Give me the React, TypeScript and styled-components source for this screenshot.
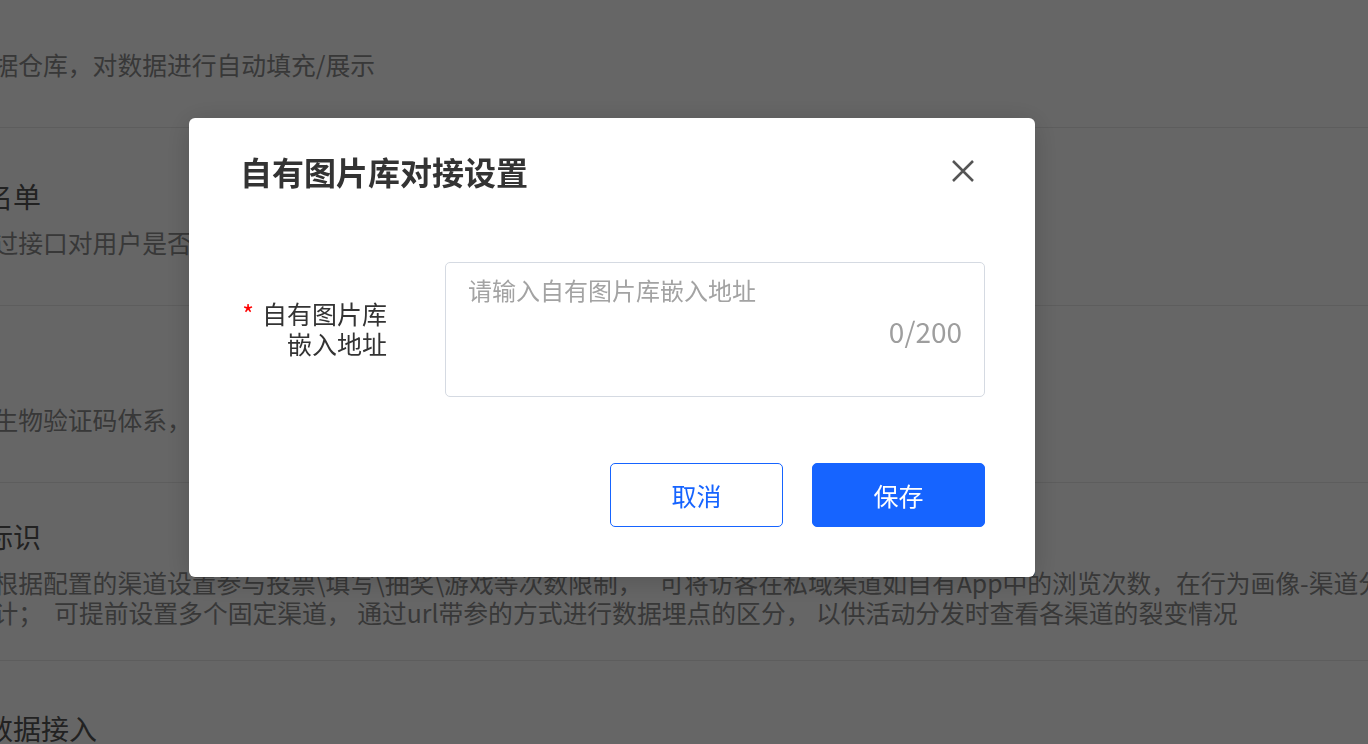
import React from 'react';
import styled, { createGlobalStyle } from 'styled-components';

const GlobalStyle = createGlobalStyle`
  html,
  body {
    margin: 0;
    padding: 0;
    overflow: hidden;
    background: #fff;
  }

  body {
    font-family: 'Noto Sans CJK SC', 'Noto Sans', sans-serif;
  }
`;

interface ISettingRow {
  title: string;
  lines: string[];
}

const rows: ISettingRow[] = [
  { title: '数仓', lines: ['对接数据仓库，对数据进行自动填充/展示'] },
  { title: '黑白名单', lines: ['支持通过接口对用户是否在黑白名单中进行校验'] },
  { title: '验证', lines: ['可对接生物验证码体系，提升活动安全性'] },
  {
    title: '渠道标识',
    lines: [
      '系统可根据配置的渠道设置参与投票\\填写\\抽奖\\游戏等次数限制，   可将访客在私域渠道如自有App中的浏览次数，在行为画像-渠道分析中进行',
      '数据统计；  可提前设置多个固定渠道， 通过url带参的方式进行数据埋点的区分， 以供活动分发时查看各渠道的裂变情况',
    ],
  },
  { title: '外部数据接入', lines: ['支持外部数据接入'] },
];

const CloseIcon = () => (
  <svg width="22" height="22" viewBox="0 0 22 22" fill="none">
    <path d="M1 1L21 21M21 1L1 21" stroke="#555" strokeWidth="2.5" />
  </svg>
);

export default function App() {
  return (
    <>
      <GlobalStyle />
      <Page>
        {rows.map((row) => (
          <Row key={row.title}>
            <RowTitle>{row.title}</RowTitle>
            <RowDesc>
              {row.lines.map((line) => (
                <DescLine key={line}>{line}</DescLine>
              ))}
            </RowDesc>
          </Row>
        ))}
      </Page>

      <Overlay>
        <Modal>
          <Header>
            <Title>自有图片库对接设置</Title>
            <CloseButton aria-label="关闭">
              <CloseIcon />
            </CloseButton>
          </Header>

          <FormRow>
            <Label>
              <Required>*</Required>自有图片库
              <br />
              嵌入地址
            </Label>
            <Field>
              <TextArea placeholder="请输入自有图片库嵌入地址" maxLength={200} />
              <Count>0/200</Count>
            </Field>
          </FormRow>

          <Footer>
            <Button>取消</Button>
            <Button $primary>保存</Button>
          </Footer>
        </Modal>
      </Overlay>
    </>
  );
}

const Page = styled.div`
  margin: -49.5px 0 0 -81px;
`;

const Row = styled.div`
  height: 176.5px;
  display: flex;
  flex-direction: column;
  justify-content: center;
  border-bottom: 1px solid #e9e9e9;
`;

const RowTitle = styled.div`
  margin-left: 10px;
  font-size: 28px;
  line-height: 40px;
  color: #555;
  white-space: nowrap;
`;

const RowDesc = styled.div`
  margin-top: 11px;
  font-size: 24.8px;
  line-height: 30px;
  color: #8c8c8c;
`;

const DescLine = styled.div`
  white-space: pre;
`;

const Overlay = styled.div`
  position: fixed;
  inset: 0;
  z-index: 1000;
  box-sizing: border-box;
  padding: 118px 0 0 189px;
  background-color: rgba(0, 0, 0, 0.6);
`;

const Modal = styled.div`
  width: 846px;
  box-sizing: border-box;
  padding: 31px 50px 50px 53px;
  background: #fff;
  border-radius: 6px;
  box-shadow: 0 4px 28px rgba(0, 0, 0, 0.18);
`;

const Header = styled.div`
  display: flex;
  align-items: center;
  justify-content: space-between;
  height: 44px;
`;

const Title = styled.div`
  margin-left: -2px;
  font-size: 32px;
  line-height: 44px;
  font-weight: 700;
  color: #333;
`;

const CloseButton = styled.button`
  display: flex;
  align-items: center;
  justify-content: center;
  width: 44px;
  height: 44px;
  padding: 0;
  border: none;
  background: transparent;
  cursor: pointer;
`;

const FormRow = styled.div`
  display: flex;
  align-items: center;
  gap: 58px;
  margin-top: 69px;
`;

const Label = styled.div`
  flex: 0 0 145px;
  margin-top: -3px;
  text-align: right;
  font-size: 25px;
  line-height: 30px;
  color: #333;
`;

const Required = styled.span`
  margin-right: 8px;
  color: #f00;
`;

const Field = styled.div`
  flex: 1;
  height: 135px;
  box-sizing: border-box;
  display: flex;
  flex-direction: column;
  padding: 12px 22px;
  border: 1px solid #d5dae2;
  border-radius: 5px;
`;

const TextArea = styled.textarea`
  height: 40px;
  padding: 0;
  border: none;
  outline: none;
  resize: none;
  font-family: inherit;
  font-size: 24px;
  line-height: 30px;
  color: #333;

  &::placeholder {
    color: #a3a3a3;
  }
`;

const Count = styled.div`
  text-align: right;
  font-size: 28px;
  line-height: 32px;
  color: #9e9e9e;
`;

const Footer = styled.div`
  display: flex;
  justify-content: flex-end;
  gap: 29px;
  margin-top: 66px;
`;

const Button = styled.button<{ $primary?: boolean }>`
  width: 173px;
  height: 64px;
  box-sizing: border-box;
  border: 1px solid #1664ff;
  border-radius: 5px;
  font-family: inherit;
  font-size: 25px;
  color: ${({ $primary }) => ($primary ? '#fff' : '#1664ff')};
  background: ${({ $primary }) => ($primary ? '#1664ff' : '#fff')};
  cursor: pointer;
`;
